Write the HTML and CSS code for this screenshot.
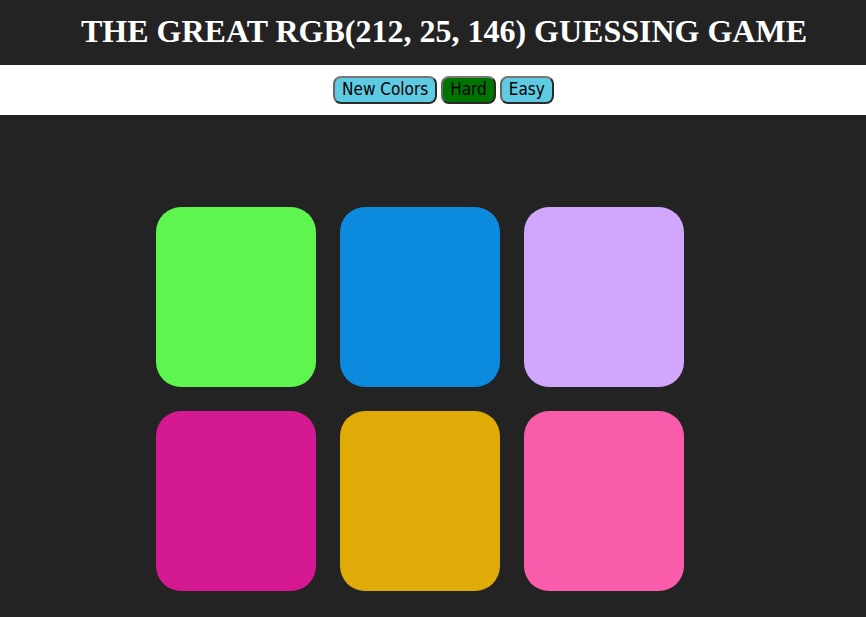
FILE: index.html
```html
<!DOCTYPE html>
<html>
<head>
<meta charset="utf-8">
<link rel="stylesheet" href="styles.css">
</head>
<body>
<header class="top">
  <h1 class="title">THE GREAT RGB(212, 25, 146) GUESSING GAME</h1>
</header>
<nav class="bar">
  <button class="btn">New Colors</button>
  <button class="btn btn-active">Hard</button>
  <button class="btn">Easy</button>
</nav>
<main class="board">
  <div class="grid">
    <div class="square sq-green"></div>
    <div class="square sq-blue"></div>
    <div class="square sq-lilac"></div>
    <div class="square sq-magenta"></div>
    <div class="square sq-gold"></div>
    <div class="square sq-pink"></div>
  </div>
</main>
</body>
</html>
```

FILE: styles.css
```css
html, body {
  margin: 0;
  padding: 0;
  background: #232323;
  height: 100%;
}
.top {
  height: 65px;
  display: flex;
  align-items: center;
  justify-content: center;
  padding-left: 22px;
  padding-bottom: 4px;
  box-sizing: border-box;
}
.title {
  margin: 0;
  color: #ffffff;
  font-family: "Liberation Serif", "Times New Roman", serif;
  font-weight: bold;
  font-size: 32px;
  line-height: 1;
}
.bar {
  background: #ffffff;
  height: 50px;
  display: flex;
  align-items: center;
  justify-content: center;
  gap: 4px;
  padding-left: 21px;
  padding-bottom: 1px;
  box-sizing: border-box;
}
.btn {
  font-family: "DejaVu Sans Condensed", "DejaVu Sans", Tahoma, sans-serif;
  font-stretch: condensed;
  font-size: 17px;
  background: #5ecbe2;
  color: #000;
  border: 2px solid #2a2a2a;
  border-top-color: #777;
  border-left-color: #666;
  border-radius: 8px;
  height: 28px;
  padding: 0 7px;
  margin: 0;
  line-height: 1;
}
.btn-active {
  background: #007400;
}
.board {
  padding-top: 92px;
  padding-left: 156px;
}
.grid {
  display: grid;
  grid-template-columns: repeat(3, 160px);
  grid-auto-rows: 180px;
  gap: 24px;
}
.square {
  border-radius: 25px;
}
.sq-green { background: rgb(94, 245, 79); }
.sq-blue { background: rgb(12, 139, 222); }
.sq-lilac { background: rgb(209, 166, 253); }
.sq-magenta { background: rgb(212, 25, 146); }
.sq-gold { background: rgb(224, 170, 7); }
.sq-pink { background: rgb(248, 92, 170); }
```
